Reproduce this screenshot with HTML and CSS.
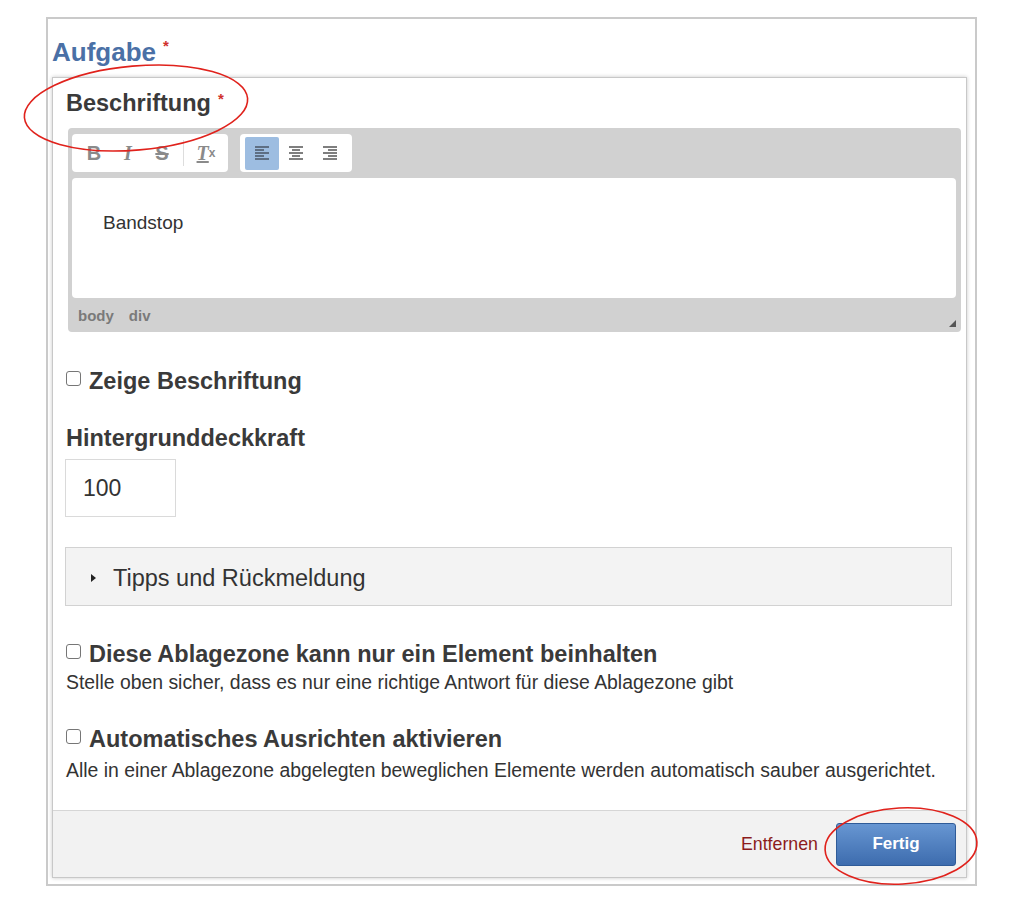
FILE: index.html
```html
<!DOCTYPE html>
<html lang="de">
<head>
  <meta charset="UTF-8">
  <meta name="viewport" content="width=device-width, initial-scale=1.0">
  <title>Ablagezone bearbeiten</title>
  <link rel="stylesheet" href="styles.css">
</head>
<body>
  <div class="frame">
    <h2 class="section-title">Aufgabe<span class="req">*</span></h2>

    <div class="panel">
      <div class="panel-body">
        <label class="field-label">Beschriftung<span class="req">*</span></label>

        <div class="editor">
          <div class="editor-toolbar">
            <span class="tb-group">
              <span class="tb-btn tb-bold">B</span>
              <span class="tb-btn tb-italic">I</span>
              <span class="tb-btn tb-strike">S</span>
              <span class="tb-sep"></span>
              <span class="tb-btn tb-clear"><u>T</u><sub>x</sub></span>
            </span>
            <span class="tb-group">
              <span class="tb-btn active">
                <svg width="16" height="16" viewBox="0 0 16 16"><path d="M1 2h14M1 5h9M1 8h14M1 11h9M1 14h14" stroke="#4a5566" stroke-width="1.6"/></svg>
              </span>
              <span class="tb-btn">
                <svg width="16" height="16" viewBox="0 0 16 16"><path d="M1 2h14M4 5h8M1 8h14M4 11h8M1 14h14" stroke="#555" stroke-width="1.6"/></svg>
              </span>
              <span class="tb-btn">
                <svg width="16" height="16" viewBox="0 0 16 16"><path d="M1 2h14M6 5h9M1 8h14M6 11h9M1 14h14" stroke="#555" stroke-width="1.6"/></svg>
              </span>
            </span>
          </div>
          <div class="editor-content">Bandstop</div>
          <div class="editor-path">
            <span>body</span>
            <span>div</span>
            <span class="resize-grip"></span>
          </div>
        </div>

        <label class="check first-check">
          <input type="checkbox">
          <span>Zeige Beschriftung</span>
        </label>

        <label class="field-label opacity-label">Hintergrunddeckkraft</label>
        <input class="number-input" type="text" value="100">

        <div class="collapsible">
          <span class="caret"></span>
          Tipps und Rückmeldung
        </div>

        <label class="check single-check">
          <input type="checkbox">
          <span>Diese Ablagezone kann nur ein Element beinhalten</span>
        </label>
        <p class="help">Stelle oben sicher, dass es nur eine richtige Antwort für diese Ablagezone gibt</p>

        <label class="check align-check">
          <input type="checkbox">
          <span>Automatisches Ausrichten aktivieren</span>
        </label>
        <p class="help align-help">Alle in einer Ablagezone abgelegten beweglichen Elemente werden automatisch sauber ausgerichtet.</p>
      </div>

      <div class="panel-footer">
        <a class="remove-link" href="#">Entfernen</a>
        <button class="done-btn">Fertig</button>
      </div>
    </div>
  </div>

  <!-- hand-drawn markers around the label and the done button -->
  <svg class="marks" width="1024" height="907" viewBox="0 0 1024 907">
    <ellipse cx="136" cy="108" rx="112" ry="42" transform="rotate(-5 136 108)"/>
    <ellipse cx="901" cy="846" rx="76" ry="38" transform="rotate(-3 901 846)"/>
  </svg>
</body>
</html>
```

FILE: styles.css
```css
* {
  box-sizing: border-box;
}
body {
  margin: 0;
  font-family: "Liberation Sans", Arial, sans-serif;
  color: #333;
  background: #fff;
}
.frame {
  width: 931px;
  margin: 17px 0 0 46px;
  padding: 18px 8px 6px 4px;
  border: 2px solid #cacaca;
}
.section-title {
  margin: 0 0 10px;
  font-size: 26px;
  line-height: 30px;
  font-weight: bold;
  color: #4a70a6;
}
.req {
  color: #d0312d;
  font-size: 15px;
  vertical-align: top;
  position: relative;
  top: -6px;
  margin-left: 7px;
}
.panel {
  border: 1px solid #c8c8c8;
  background: #fff;
  box-shadow: 0 0 4px rgba(0,0,0,0.22);
}
.panel-body {
  padding: 11px 14px 28px 13px;
}
.field-label {
  display: block;
  font-size: 23.5px;
  line-height: 28px;
  font-weight: bold;
  color: #3a3a3a;
}
.field-label .req {
  top: -4px;
}

/* rich text editor */
.editor {
  margin: 11px -9px 0 2px;
  background: #d1d1d1;
  border-radius: 4px;
  padding: 0 5px 0 4px;
}
.editor-toolbar {
  display: flex;
  gap: 12px;
  padding: 6px 0;
}
.tb-group {
  display: flex;
  align-items: center;
  height: 38px;
  padding: 0 5px;
  background: #fff;
  border-radius: 4px;
}
.tb-btn {
  display: flex;
  align-items: center;
  justify-content: center;
  width: 34px;
  height: 33px;
  border-radius: 2px;
  color: #8a8a8a;
  font-size: 20px;
}
.tb-btn.active {
  background: #9dbde1;
}
.tb-bold {
  font-weight: bold;
}
.tb-italic {
  font-family: "Liberation Serif", serif;
  font-style: italic;
  font-weight: bold;
}
.tb-strike {
  font-weight: bold;
  text-decoration: line-through;
}
.tb-clear {
  font-family: "Liberation Serif", serif;
  font-style: italic;
  font-weight: bold;
}
.tb-clear sub {
  font-family: "Liberation Sans", sans-serif;
  font-style: normal;
  font-size: 12px;
}
.tb-sep {
  width: 1px;
  height: 26px;
  margin: 0 5px 0 4px;
  background: #ddd;
}
.editor-content {
  height: 120px;
  padding: 33px 31px;
  background: #fff;
  border-radius: 4px;
  font-size: 19px;
  line-height: 23px;
  color: #333;
}
.editor-path {
  position: relative;
  display: flex;
  align-items: center;
  gap: 15px;
  height: 34px;
  padding-left: 6px;
  font-size: 15px;
  font-weight: bold;
  color: #7a7a7a;
}
.resize-grip {
  position: absolute;
  right: 0;
  bottom: 5px;
  width: 0;
  height: 0;
  border-left: 7px solid transparent;
  border-bottom: 7px solid #555;
}

/* checkbox rows */
.check {
  display: flex;
  align-items: flex-start;
  font-size: 23.5px;
  line-height: 28px;
  font-weight: bold;
  color: #3a3a3a;
}
.check input {
  appearance: none;
  flex: none;
  width: 15px;
  height: 15px;
  margin: 4px 8px 0 0;
  border: 1px solid #767676;
  border-radius: 3px;
  background: #fff;
}
.first-check {
  margin-top: 35px;
}
.opacity-label {
  margin-top: 29px;
}
.number-input {
  display: block;
  width: 111px;
  height: 58px;
  margin: 7px 0 0 -1px;
  padding: 0 0 0 17px;
  border: 1px solid #dadada;
  font-family: "Liberation Sans", Arial, sans-serif;
  font-size: 23px;
  color: #333;
}
.collapsible {
  display: flex;
  align-items: center;
  height: 59px;
  margin: 30px 0 0 -1px;
  padding: 3px 0 0 25px;
  border: 1px solid #d2d2d2;
  background: #f3f3f3;
  font-size: 23.5px;
  color: #333;
}
.caret {
  width: 0;
  height: 0;
  margin-right: 17px;
  border-top: 4px solid transparent;
  border-bottom: 4px solid transparent;
  border-left: 5px solid #222;
}
.single-check {
  margin-top: 34px;
}
.help {
  margin: 3px 0 0;
  font-size: 19.4px;
  line-height: 23px;
  color: #333;
}
.align-check {
  margin-top: 31px;
}
.align-help {
  margin-top: 6px;
}

/* footer with actions */
.panel-footer {
  display: flex;
  align-items: center;
  justify-content: flex-end;
  gap: 18px;
  height: 67px;
  padding: 0 10px;
  border-top: 1px solid #d6d6d6;
  background: #f2f2f2;
}
.remove-link {
  color: #8c1c1c;
  font-size: 17.8px;
  text-decoration: none;
}
.done-btn {
  width: 120px;
  height: 43px;
  border: 1px solid #2f5b98;
  border-radius: 3px;
  background: linear-gradient(#6796d2, #3d6cae);
  color: #fff;
  font-family: "Liberation Sans", Arial, sans-serif;
  font-size: 17px;
  font-weight: bold;
  cursor: pointer;
}

.marks {
  position: absolute;
  left: 0;
  top: 0;
  pointer-events: none;
}
.marks ellipse {
  fill: none;
  stroke: #e0221c;
  stroke-width: 1.6;
}
```
